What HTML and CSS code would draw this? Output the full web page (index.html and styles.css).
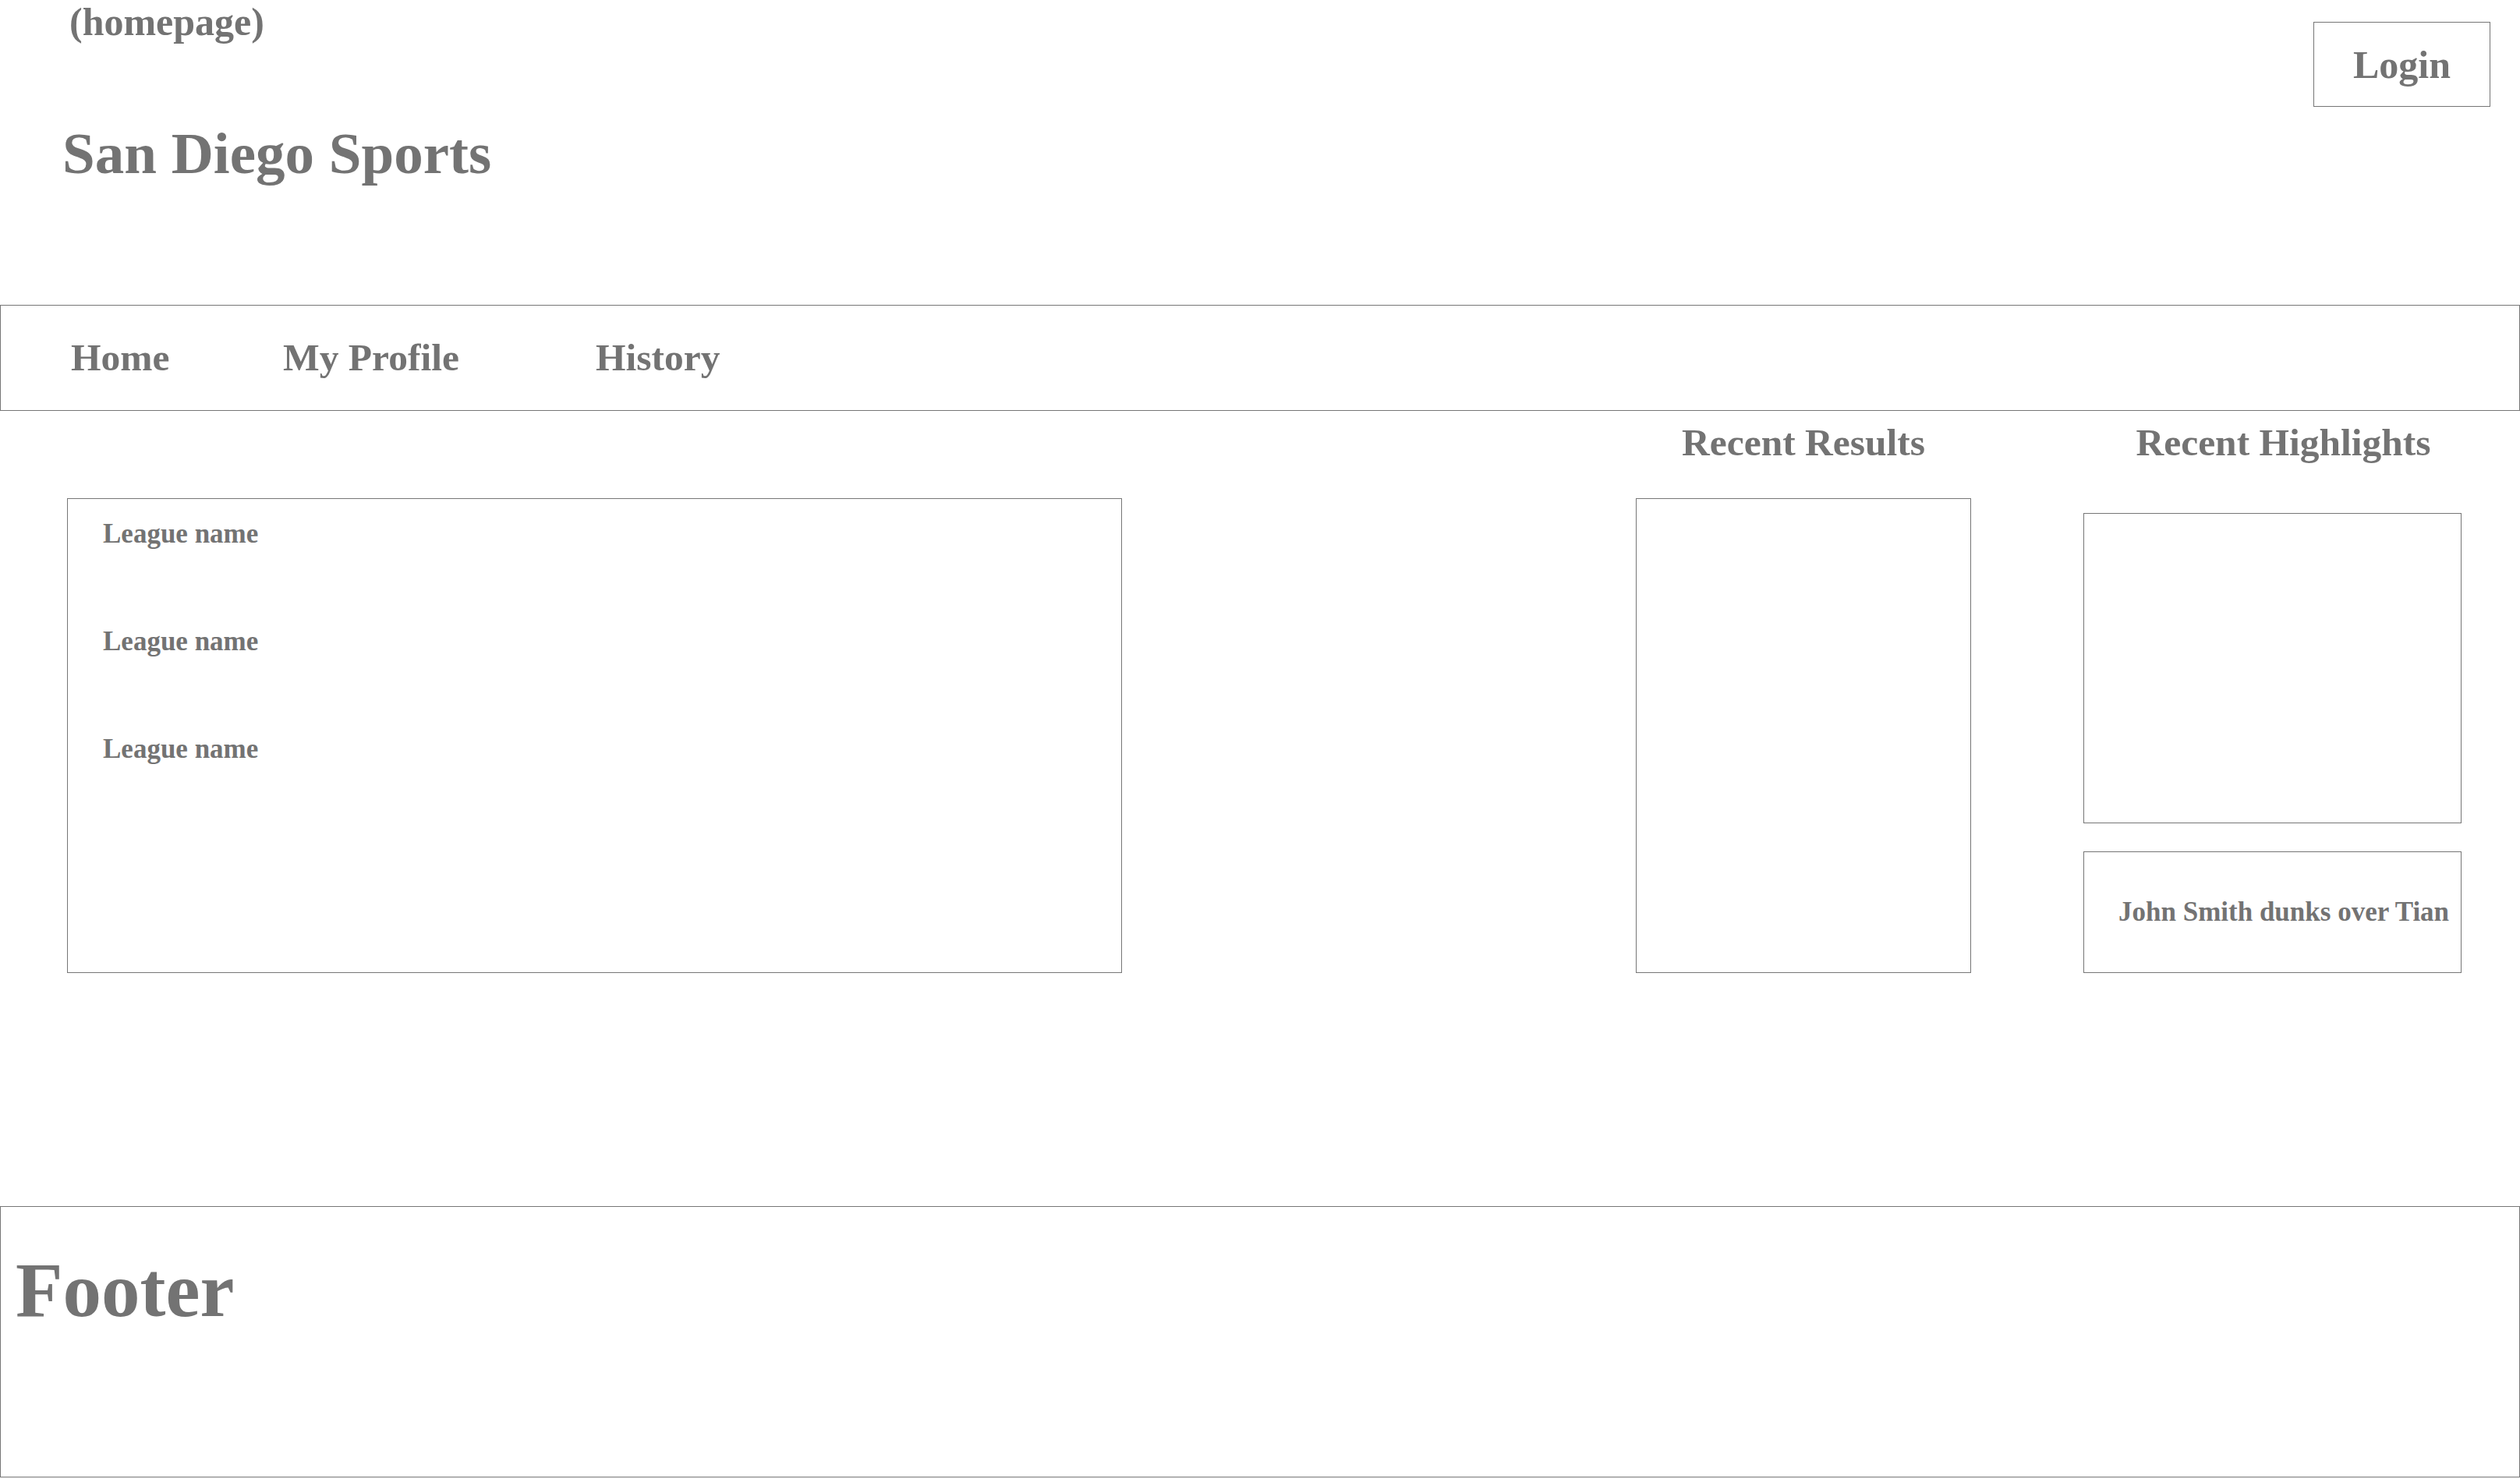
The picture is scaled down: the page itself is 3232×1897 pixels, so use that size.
FILE: index.html
```html
<!DOCTYPE html>
<html lang="en">
<head>
<meta charset="utf-8">
<title>San Diego Sports</title>
<link rel="stylesheet" href="styles.css">
</head>
<body>
<header class="top">
  <div class="brand">
    <p class="page-tag">(homepage)</p>
    <h1 class="site-title">San Diego Sports</h1>
  </div>
  <button class="login" type="button">Login</button>
</header>
<nav class="nav">
  <a class="nav-item nav-home" href="#">Home</a>
  <a class="nav-item nav-profile" href="#">My Profile</a>
  <a class="nav-item" href="#">History</a>
</nav>
<main class="main">
  <section class="leagues">
    <p class="league">League name</p>
    <p class="league">League name</p>
    <p class="league">League name</p>
  </section>
  <section class="results-col">
    <h2 class="col-title">Recent Results</h2>
    <div class="results-box"></div>
  </section>
  <section class="highlights-col">
    <h2 class="col-title">Recent Highlights</h2>
    <div class="highlight-media"></div>
    <div class="highlight-caption">John Smith dunks over Tian</div>
  </section>
</main>
<footer class="footer">
  <p class="footer-title">Footer</p>
</footer>
</body>
</html>
```
FILE: styles.css
```css
* { box-sizing: border-box; }
html, body { margin: 0; padding: 0; background: #ffffff; }
body {
  width: 3232px;
  font-family: "Liberation Serif", "Times New Roman", serif;
  font-weight: bold;
  color: #737373;
}
p, h1, h2 { margin: 0; font-weight: bold; }

.top {
  height: 391px;
  display: flex;
  justify-content: space-between;
  align-items: flex-start;
  padding: 0 38px 0 80px;
}
.page-tag {
  font-size: 50px;
  line-height: 56px;
  margin-left: 9px;
}
.site-title {
  font-size: 75px;
  line-height: 84px;
  margin-top: 99px;
}
.login {
  margin-top: 28px;
  width: 227px;
  height: 109px;
  display: flex;
  align-items: center;
  justify-content: center;
  background: #fff;
  border: 1px solid #767676;
  font-family: inherit;
  font-weight: bold;
  color: inherit;
  font-size: 50px;
  line-height: 60px;
  padding: 0;
}

.nav {
  display: flex;
  width: 100%;
  height: 136px;
  border: 1px solid #767676;
  padding: 37px 0 37px 90px;
}
.nav-item {
  font-size: 49.5px;
  line-height: 60px;
  color: inherit;
  text-decoration: none;
}
.nav-home { width: 272px; }
.nav-profile { width: 401px; }

.main {
  display: flex;
  align-items: flex-start;
  padding-left: 86px;
}
.leagues {
  width: 1353px;
  height: 609px;
  margin-top: 112px;
  border: 1px solid #767676;
  padding: 25px 0 0 45px;
  display: flex;
  flex-direction: column;
  gap: 98px;
}
.league {
  font-size: 35px;
  line-height: 40px;
}
.col-title {
  margin-top: 13px;
  font-size: 49.5px;
  line-height: 56px;
  text-align: center;
  white-space: nowrap;
}
.results-col {
  width: 430px;
  margin-left: 659px;
}
.results-box {
  margin-top: 43px;
  height: 609px;
  border: 1px solid #767676;
}
.highlights-col {
  width: 513px;
  margin-left: 144px;
}
.highlight-media {
  margin-top: 62px;
  width: 485px;
  height: 398px;
  border: 1px solid #767676;
}
.highlight-caption {
  margin-top: 36px;
  width: 485px;
  height: 156px;
  border: 1px solid #767676;
  display: flex;
  align-items: center;
  padding-left: 44px;
  font-size: 35px;
  line-height: 40px;
  white-space: nowrap;
}

.footer {
  margin-top: 299px;
  width: 100%;
  height: 348px;
  border: 1px solid #767676;
  padding: 51px 0 0 19px;
}
.footer-title {
  font-size: 99px;
  line-height: 112px;
}
```
